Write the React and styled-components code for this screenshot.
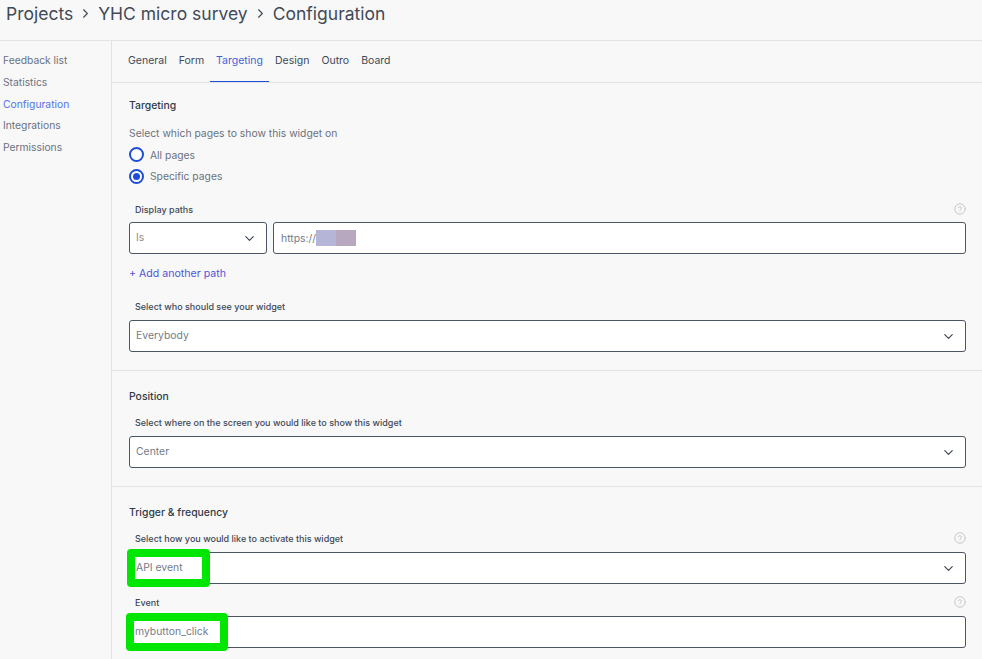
import React from "react";
import styled, { createGlobalStyle } from "styled-components";
import { ChevronRight, ChevronDown } from "lucide-react";

const Global = createGlobalStyle`
  html, body { margin: 0; padding: 0; background: #f8f8f8; }
  body { font-family: Inter, "Noto Sans", sans-serif; color: #4b5563; overflow: hidden; }
  * { box-sizing: border-box; }
`;

const Page = styled.div`
  width: 982px;
  height: 659px;
  overflow: hidden;
  background: #f8f8f8;
`;

const Header = styled.header`
  height: 41px;
  display: flex;
  align-items: flex-start;
  padding: 3px 0 0 6px;
  border-bottom: 1px solid #e2e3e5;
`;

const Crumb = styled.span`
  font-size: 17.5px;
  line-height: 21px;
  color: #414a57;
`;

const CrumbSep = styled.span`
  display: flex;
  height: 21px;
  align-items: center;
  margin: 0 5px 0 5px;
  color: #414a57;
`;

const Body = styled.div`
  display: flex;
`;

const Sidebar = styled.nav`
  width: 112px;
  height: 618px;
  flex: none;
  padding: 9px 0 0 3px;
  border-right: 1px solid #e2e3e5;
`;

const SideItem = styled.a`
  display: block;
  font-size: 10.3px;
  line-height: 21.75px;
  color: ${(p) => (p.$active ? "#5274e8" : "#6b7280")};
`;

const Main = styled.main`
  flex: 1;
  min-width: 0;
`;

const Tabs = styled.div`
  height: 42px;
  display: flex;
  padding-left: 10px;
  border-bottom: 1px solid #e2e3e5;
`;

const Tab = styled.a`
  padding: 0 6px;
  height: 41px;
  line-height: 39px;
  font-size: 10.5px;
  color: ${(p) => (p.$active ? "#3f62d8" : "#414a57")};
  border-bottom: ${(p) => (p.$active ? "1px solid #1d4ed8" : "none")};
`;

const Section = styled.section`
  padding: ${(p) => p.$pad || "18px"} 16px 18px 17px;
  border-bottom: ${(p) => (p.$last ? "none" : "1px solid #e2e3e5")};
`;

const Heading = styled.h2`
  margin: 0;
  font-size: 10.4px;
  line-height: 16px;
  font-weight: 500;
  color: #2f3a48;
`;

const Hint = styled.p`
  margin: 11px 0 3px;
  font-size: 10.35px;
  line-height: 16px;
  color: #6b7280;
`;

const RadioRow = styled.label`
  display: flex;
  align-items: center;
  gap: 6px;
  height: 21.5px;
  font-size: 10.3px;
  color: #6b7280;
`;

const Radio = styled.span`
  width: 15px;
  height: 15px;
  flex: none;
  border-radius: 50%;
  border: 2px solid #1d4ed8;
  background: #fff;
  display: flex;
  align-items: center;
  justify-content: center;
  &::after {
    content: "";
    display: ${(p) => (p.$checked ? "block" : "none")};
    width: 7px;
    height: 7px;
    border-radius: 50%;
    background: #1d4ed8;
  }
`;

const LabelRow = styled.div`
  display: flex;
  align-items: center;
  justify-content: space-between;
  height: 14px;
  margin-top: ${(p) => p.$top || "0"};
  margin-bottom: ${(p) => p.$bottom || "7px"};
  padding: 0 0 0 6px;
`;

const FieldLabel = styled.span`
  font-size: 9px;
  font-weight: 500;
  color: #3f4856;
`;

const Help = styled.span`
  display: flex;
  color: #c5c8cf;
`;

const Row = styled.div`
  display: flex;
  gap: 6px;
`;

const Field = styled.div`
  position: relative;
  height: 32px;
  flex: ${(p) => (p.$width ? `0 0 ${p.$width}` : "1")};
  display: flex;
  align-items: center;
  justify-content: space-between;
  padding: 0 ${(p) => (p.$chevron ? "9px" : "7px")} 0 ${(p) => p.$left || "6px"};
  background: #fff;
  border: 1px solid #4b5563;
  border-radius: 3px;
  font-size: 10.4px;
  color: ${(p) => (p.$muted ? "#9a8a78" : "#737c89")};
`;

const FieldValue = styled.span`
  margin-bottom: 2px;
`;

const Redacted = styled.span`
  display: inline-block;
  width: 20px;
  height: 16px;
  background: ${(p) => p.$color};
`;

const UrlValue = styled.span`
  display: flex;
  align-items: center;
`;

const AddLink = styled.a`
  display: block;
  margin: 13px 0 0;
  font-size: 10.6px;
  line-height: 14px;
  color: #4f56d8;
`;

// green annotation painted over the screenshot by whoever took it
const Marker = styled.span`
  position: absolute;
  left: ${(p) => p.$left};
  top: -4px;
  height: 38px;
  width: ${(p) => p.$width};
  padding: 0 0 2px 1px;
  display: flex;
  align-items: center;
  background: #fff;
  border: 8px solid #00e600;
  border-radius: 4px;
  font-size: 10.4px;
  white-space: nowrap;
  color: #737c89;
`;

const HelpIcon = () => (
  <Help>
    <svg width="12" height="12" viewBox="0 0 24 24" fill="none" stroke="currentColor" strokeWidth="2" strokeLinecap="round">
      <circle cx="12" cy="12" r="10.5" />
      <path d="M9 9.2a3 3 0 0 1 5.8 1c0 2-2.8 2.4-2.8 4" />
      <path d="M12 17.6h.01" />
    </svg>
  </Help>
);

const Chevron = () => <ChevronDown size={15} color="#374151" strokeWidth={1.8} />;

const tabs = ["General", "Form", "Targeting", "Design", "Outro", "Board"];
const sideItems = ["Feedback list", "Statistics", "Configuration", "Integrations", "Permissions"];

export default function App() {
  return (
    <Page>
      <Global />
      <Header>
        <Crumb>Projects</Crumb>
        <CrumbSep><ChevronRight size={15} strokeWidth={1.8} /></CrumbSep>
        <Crumb>YHC micro survey</Crumb>
        <CrumbSep><ChevronRight size={15} strokeWidth={1.8} /></CrumbSep>
        <Crumb>Configuration</Crumb>
      </Header>
      <Body>
        <Sidebar>
          {sideItems.map((s) => (
            <SideItem key={s} $active={s === "Configuration"}>{s}</SideItem>
          ))}
        </Sidebar>
        <Main>
          <Tabs>
            {tabs.map((t) => (
              <Tab key={t} $active={t === "Targeting"}>{t}</Tab>
            ))}
          </Tabs>
          <Section $pad="15px">
            <Heading>Targeting</Heading>
            <Hint>Select which pages to show this widget on</Hint>
            <RadioRow><Radio />All pages</RadioRow>
            <RadioRow><Radio $checked />Specific pages</RadioRow>
            <LabelRow $top="15px" $bottom="6px">
              <FieldLabel>Display paths</FieldLabel>
              <HelpIcon />
            </LabelRow>
            <Row>
              <Field $width="138px" $chevron $muted><FieldValue>Is</FieldValue><Chevron /></Field>
              <Field $left="7px">
                <UrlValue>
                  https://
                  <Redacted $color="#b5b5d7" />
                  <Redacted $color="#b8a8bf" />
                </UrlValue>
              </Field>
            </Row>
            <AddLink>+ Add another path</AddLink>
            <LabelRow $top="18px">
              <FieldLabel>Select who should see your widget</FieldLabel>
            </LabelRow>
            <Field $chevron><FieldValue>Everybody</FieldValue><Chevron /></Field>
          </Section>
          <Section>
            <Heading>Position</Heading>
            <LabelRow $top="10px">
              <FieldLabel>Select where on the screen you would like to show this widget</FieldLabel>
            </LabelRow>
            <Field $chevron><FieldValue>Center</FieldValue><Chevron /></Field>
          </Section>
          <Section $last>
            <Heading>Trigger &amp; frequency</Heading>
            <LabelRow $top="10px">
              <FieldLabel>Select how you would like to activate this widget</FieldLabel>
              <HelpIcon />
            </LabelRow>
            <Field $chevron>
              <Marker $left="-3px" $width="83px">API event</Marker>
              <span />
              <Chevron />
            </Field>
            <LabelRow $top="11px">
              <FieldLabel>Event</FieldLabel>
              <HelpIcon />
            </LabelRow>
            <Field>
              <Marker $left="-4px" $width="102px">mybutton_click</Marker>
            </Field>
          </Section>
        </Main>
      </Body>
    </Page>
  );
}
